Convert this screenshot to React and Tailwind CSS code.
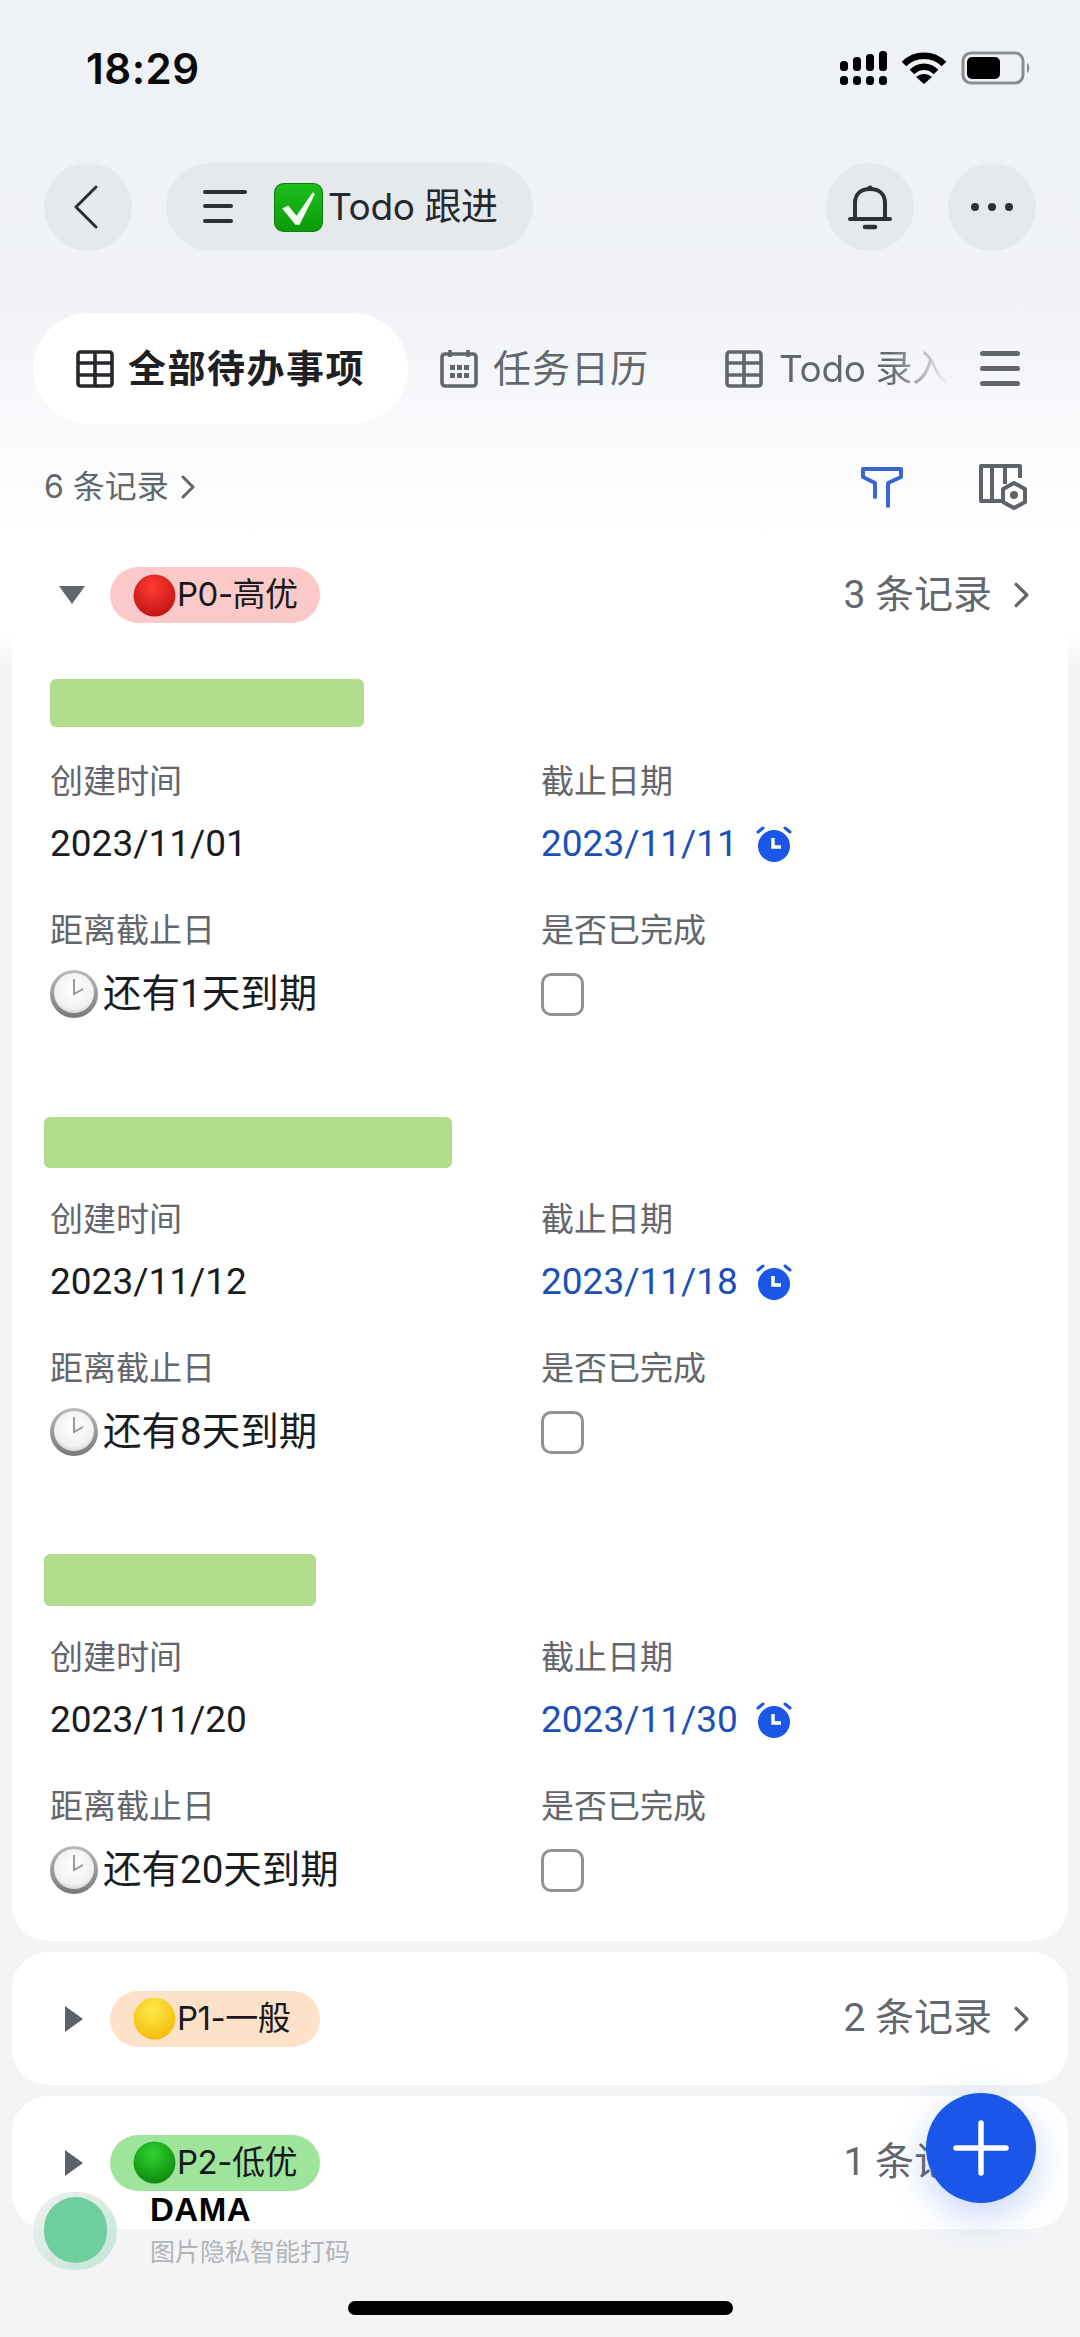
import React from 'react';

const FONT = 'font-["Inter","Noto_Sans_CJK_SC",sans-serif]';
const VALUE_FONT = 'font-["Roboto","Noto_Sans_CJK_SC",sans-serif]';

// 状态栏图标
const SignalIcon = () => (
  <svg width="48" height="36" viewBox="0 0 48 36" fill="#000">
    <rect x="1" y="11" width="8" height="10" rx="3.5" />
    <rect x="14" y="7" width="8" height="14" rx="3.5" />
    <rect x="27" y="4" width="8" height="17" rx="3.5" />
    <rect x="40" y="1" width="8" height="20" rx="3.5" />
    <rect x="1" y="26" width="8" height="9" rx="3.5" />
    <rect x="14" y="26" width="8" height="9" rx="3.5" />
    <rect x="27" y="26" width="8" height="9" rx="3.5" />
    <rect x="40" y="26" width="8" height="9" rx="3.5" />
  </svg>
);

const WifiIcon = () => (
  <svg width="46" height="34" viewBox="0 0 46 34" fill="none" stroke="#000" strokeWidth="6.5">
    <path d="M3 13C14 2 32 2 43 13" />
    <path d="M11 21C18 14 28 14 35 21" />
    <path d="M23 33L15 26C20 22 26 22 31 26Z" fill="#000" stroke="none" />
  </svg>
);

const BatteryIcon = () => (
  <svg width="70" height="34" viewBox="0 0 70 34">
    <rect x="2" y="2" width="60" height="30" rx="8" fill="none" stroke="#8b8c8e" strokeWidth="3" />
    <rect x="6" y="6" width="33" height="22" rx="5" fill="#000" />
    <path d="M66 12C69 13 69 21 66 22Z" fill="#8b8c8e" />
  </svg>
);

// 导航栏图标
const BackIcon = () => (
  <svg width="26" height="44" viewBox="0 0 26 44" fill="none" stroke="#2d3136" strokeWidth="3" strokeLinecap="round" strokeLinejoin="round">
    <path d="M23 2L3 22L23 42" />
  </svg>
);

const TitleMenuIcon = () => (
  <svg width="44" height="36" viewBox="0 0 44 36" fill="none" stroke="#2d3136" strokeWidth="4" strokeLinecap="round">
    <path d="M2 3H42" />
    <path d="M2 17H28" />
    <path d="M2 32H28" />
  </svg>
);

const BellIcon = () => (
  <svg width="44" height="46" viewBox="0 0 44 46" fill="none" stroke="#2d3136" strokeWidth="4" strokeLinecap="round">
    <path d="M7 34V19C7 10 13 5 22 5C31 5 37 10 37 19V34" />
    <path d="M2 35H42" />
    <path d="M17 43H27" strokeWidth="4.5" />
    <circle cx="22" cy="4" r="2.5" fill="#2d3136" stroke="none" />
  </svg>
);

const CheckEmoji = () => (
  <svg width="49" height="49" viewBox="0 0 48 48">
    <defs>
      <linearGradient id="checkBg" x1="0" y1="0" x2="0" y2="1">
        <stop offset="0" stopColor="#1cc01c" />
        <stop offset="1" stopColor="#0c9a0c" />
      </linearGradient>
    </defs>
    <rect x="0.5" y="0.5" width="47" height="47" rx="9" fill="url(#checkBg)" stroke="#0a7d0a" />
    <path d="M8 25L14 22L22 32L38 9L40 11L25 41H21Z" fill="#f4fff0" />
  </svg>
);

const TableIcon = ({ color }) => (
  <svg width="38" height="38" viewBox="0 0 38 38" fill="none" stroke={color} strokeWidth="3.6">
    <rect x="2" y="2" width="34" height="34" rx="2.5" />
    <path d="M2 13H36M2 25H36M19 2V36" />
  </svg>
);

const CalendarIcon = () => (
  <svg width="38" height="40" viewBox="0 0 38 40" fill="none" stroke="#63676c" strokeWidth="3.6">
    <rect x="2" y="5" width="34" height="32" rx="3" />
    <path d="M10 1V8M28 1V8" />
    <g fill="#63676c" stroke="none">
      <rect x="10" y="16" width="5" height="5" />
      <rect x="17" y="16" width="5" height="5" />
      <rect x="24" y="16" width="5" height="5" />
      <rect x="10" y="24" width="5" height="5" />
      <rect x="17" y="24" width="5" height="5" />
      <rect x="24" y="24" width="5" height="5" />
    </g>
  </svg>
);

const FilterIcon = () => (
  <svg width="44" height="42" viewBox="0 0 44 42" fill="none" stroke="#3b66d1" strokeWidth="4" strokeLinecap="round" strokeLinejoin="round">
    <path d="M15 31V17L3 11V3H41V11L28 17V40" />
  </svg>
);

const ViewSettingIcon = () => (
  <svg width="50" height="46" viewBox="0 0 50 46" fill="none" stroke="#5f6368" strokeWidth="4" strokeLinejoin="round">
    <path d="M27 37H3V2H42V14" />
    <path d="M14 2V37M27 2V20" />
    <path d="M36 19L47 25V38L36 44L25 38V25Z" fill="#fff" />
    <circle cx="36" cy="31" r="4" fill="#5f6368" stroke="none" />
  </svg>
);

const Chevron = ({ className }) => (
  <svg className={className} viewBox="0 0 14 24" fill="none" stroke="#62666b" strokeWidth="3" strokeLinecap="round" strokeLinejoin="round">
    <path d="M2 2L12 12L2 22" />
  </svg>
);

const TriangleDown = () => (
  <svg width="28" height="18" viewBox="0 0 28 18" fill="#62666d">
    <path d="M1 0H27L14 18Z" />
  </svg>
);

const TriangleRight = () => (
  <svg width="18" height="26" viewBox="0 0 18 26" fill="#5c6068">
    <path d="M0 0L18 13L0 26Z" />
  </svg>
);

const Dot = ({ id, light, dark }) => (
  <svg width="43" height="43" viewBox="0 0 42 42" className="shrink-0">
    <defs>
      <radialGradient id={id} cx="0.45" cy="0.3" r="0.8">
        <stop offset="0" stopColor={light} />
        <stop offset="1" stopColor={dark} />
      </radialGradient>
    </defs>
    <circle cx="21" cy="21" r="20.5" fill={`url(#${id})`} />
  </svg>
);

const ClockEmoji = () => (
  <svg width="48" height="48" viewBox="0 0 48 48" className="shrink-0">
    <defs>
      <radialGradient id="clockFace" cx="0.5" cy="0.4" r="0.65">
        <stop offset="0" stopColor="#ffffff" />
        <stop offset="0.75" stopColor="#f1f1ef" />
        <stop offset="1" stopColor="#c9c9c6" />
      </radialGradient>
      <linearGradient id="clockRim" x1="0" y1="0" x2="0" y2="1">
        <stop offset="0" stopColor="#b9bcc0" />
        <stop offset="1" stopColor="#77797b" />
      </linearGradient>
    </defs>
    <circle cx="24" cy="24" r="24" fill="url(#clockRim)" />
    <circle cx="24" cy="23" r="20" fill="url(#clockFace)" />
    <path d="M24 9V24L33 19" fill="none" stroke="#8f9296" strokeWidth="1.8" />
  </svg>
);

const AlarmIcon = () => (
  <svg width="36" height="36" viewBox="0 0 36 36" className="shrink-0">
    <circle cx="18" cy="20" r="16" fill="#1a56e8" />
    <path d="M2 6L7 2M34 6L29 2" stroke="#1a56e8" strokeWidth="3" strokeLinecap="round" />
    <path d="M17 12V21H25" fill="none" stroke="#fff" strokeWidth="3.5" />
  </svg>
);

// 记录卡片内字段
const FieldLabel = ({ children }) => (
  <div className="h-[44px] leading-[44px] text-[33px] text-[#63666b]">{children}</div>
);

const Record = ({ barClass, created, deadline, remain, isLast }) => (
  <div className={isLast ? 'pb-[46px]' : 'h-[438px]'}>
    <div className="h-[50px] flex items-center">
      <div className={`${barClass} bg-[#b0dc8c] rounded-[6px] shrink-0`} />
    </div>
    <div className="grid grid-cols-[491px_1fr] pl-[38px] mt-[31px]">
      <div>
        <FieldLabel>创建时间</FieldLabel>
        <div className={`${VALUE_FONT} mt-[16px] h-[50px] leading-[50px] text-[37px] text-[#1b1c1e]`}>{created}</div>
      </div>
      <div>
        <FieldLabel>截止日期</FieldLabel>
        <div className="mt-[16px] h-[50px] flex items-center">
          <span className={`${VALUE_FONT} w-[215px] text-[37px] text-[#1d4fb8]`}>{deadline}</span>
          <AlarmIcon />
        </div>
      </div>
      <div className="mt-[39px]">
        <FieldLabel>距离截止日</FieldLabel>
        <div className="mt-[17px] h-[50px] flex items-center gap-[5px]">
          <ClockEmoji />
          <span className={`${VALUE_FONT} text-[38.5px] text-[#1b1c1e]`}>{remain}</span>
        </div>
      </div>
      <div className="mt-[39px]">
        <FieldLabel>是否已完成</FieldLabel>
        <div className="mt-[17px] h-[50px] flex items-center">
          <div className="w-[43px] h-[43px] rounded-[10px] border-[3px] border-[#8f9296] bg-white" />
        </div>
      </div>
    </div>
  </div>
);

const Tag = ({ bg, dot, label }) => (
  <div className={`${bg} w-[210px] h-[56px] rounded-full flex items-center pl-[23px] text-[33px] text-[#17191c]`}>
    {dot}
    <span className="ml-[1px] tracking-[-0.5px] whitespace-nowrap">{label}</span>
  </div>
);

const GroupHeader = ({ open, tag, count }) => (
  <div className="flex items-center h-full">
    <div className={open ? 'w-[110px] pl-[58px]' : 'w-[110px] pl-[65px]'}>
      {open ? <TriangleDown /> : <TriangleRight />}
    </div>
    {tag}
    <div className={`${VALUE_FONT} ml-auto flex items-center pr-[51px] text-[39px] text-[#63666b]`}>
      <span>{count} 条记录</span>
      <Chevron className="w-[15px] h-[26px] ml-[22px]" />
    </div>
  </div>
);

const records = [
  { barClass: 'w-[314px] h-[48px] ml-[38px]', created: '2023/11/01', deadline: '2023/11/11', remain: '还有1天到期' },
  { barClass: 'w-[408px] h-[51px] ml-[32px] mt-[2px]', created: '2023/11/12', deadline: '2023/11/18', remain: '还有8天到期' },
  { barClass: 'w-[272px] h-[52px] ml-[32px] mt-[2px]', created: '2023/11/20', deadline: '2023/11/30', remain: '还有20天到期', isLast: true },
];

export default function App() {
  return (
    <div className={`${FONT} relative w-[1080px] h-[2337px] overflow-hidden bg-[#f2f4f6]`}>
      {/* 顶部渐变区域 */}
      <div className="h-[630px] bg-linear-to-b from-[#eef1f5] via-[#f1f3f7] via-50% to-white to-85%">
        <div className="h-[136px] flex items-center justify-between pl-[86px] pr-[49px]">
          <span className="text-[42px] font-semibold text-[#0b0b0b] tracking-[0.5px]">18:29</span>
          <div className="flex items-center gap-[14px]">
            <SignalIcon />
            <WifiIcon />
            <BatteryIcon />
          </div>
        </div>

        <div className="flex items-center pl-[44px] pr-[44px] mt-[27px]">
          <div className="w-[88px] h-[88px] rounded-full bg-[#e6e9ec] flex items-center justify-center pr-[4px]">
            <BackIcon />
          </div>
          <div className="ml-[34px] w-[367px] h-[88px] rounded-full bg-[#e6e9ec] flex items-center pl-[37px]">
            <TitleMenuIcon />
            <div className="ml-[27px]"><CheckEmoji /></div>
            <span className="ml-[5px] text-[37px] tracking-[-0.4px] text-[#25282c] whitespace-nowrap">Todo 跟进</span>
          </div>
          <div className="ml-auto w-[88px] h-[88px] rounded-full bg-[#e6e9ec] flex items-center justify-center">
            <BellIcon />
          </div>
          <div className="ml-[34px] w-[88px] h-[88px] rounded-full bg-[#e6e9ec] flex items-center justify-center gap-[9px]">
            <span className="w-[8px] h-[8px] rounded-full bg-[#2d3136]" />
            <span className="w-[8px] h-[8px] rounded-full bg-[#2d3136]" />
            <span className="w-[8px] h-[8px] rounded-full bg-[#2d3136]" />
          </div>
        </div>

        {/* 视图标签 */}
        <div className="flex items-center pl-[33px] mt-[62px] h-[111px]">
          <div className="w-[375px] h-[111px] rounded-full bg-white flex items-center pl-[43px]">
            <TableIcon color="#25282c" />
            <span className="ml-[14px] text-[38px] font-bold text-[#1e2023] tracking-[1.5px] whitespace-nowrap">全部待办事项</span>
          </div>
          <div className="ml-[32px] flex items-center">
            <CalendarIcon />
            <span className="ml-[15px] text-[38px] text-[#63676c] tracking-[1px] whitespace-nowrap">任务日历</span>
          </div>
          <div className="ml-[76px] flex items-center">
            <TableIcon color="#63676c" />
            <span className="ml-[16px] w-[170px] text-[37px] tracking-[-0.4px] whitespace-nowrap bg-linear-to-r from-[#63676c] from-65% to-transparent to-100% bg-clip-text text-transparent">Todo 录入</span>
          </div>
          <div className="ml-auto pr-[60px] flex flex-col gap-[10px]">
            <span className="block w-[40px] h-[5px] bg-[#63676c] rounded-full" />
            <span className="block w-[40px] h-[5px] bg-[#63676c] rounded-full" />
            <span className="block w-[40px] h-[5px] bg-[#63676c] rounded-full" />
          </div>
        </div>

        {/* 记录数与筛选 */}
        <div className="h-[126px] flex items-center pl-[44px] pr-[52px]">
          <span className="text-[32px] text-[#63666b]">6 条记录</span>
          <Chevron className="w-[14px] h-[24px] ml-[12px]" />
          <div className="ml-auto mr-[74px]"><FilterIcon /></div>
          <ViewSettingIcon />
        </div>

        <div className="h-[72px] mt-[9px]">
          <GroupHeader open count={3} tag={<Tag bg="bg-[#fcc9c9]" label="P0-高优" dot={<Dot id="dotRed" light="#ff3b30" dark="#b80f12" />} />} />
        </div>
      </div>

      {/* 分组卡片 */}
      <div className="px-[12px] bg-linear-to-b from-white to-[#f2f4f6] to-[40px]">
        <div className="bg-white rounded-b-[36px] pt-[48px]">
          {records.map((r) => (
            <Record key={r.created} {...r} />
          ))}
        </div>
      </div>
      <div className="mx-[12px] mt-[11px] flex flex-col gap-[11px]">
        <div className="bg-white rounded-[36px] h-[133px]">
          <div className="h-full -mx-[12px]">
            <GroupHeader count={2} tag={<Tag bg="bg-[#fde2c9]" label="P1-一般" dot={<Dot id="dotYellow" light="#ffe94d" dark="#f2b600" />} />} />
          </div>
        </div>
        <div className="bg-white rounded-[36px] h-[133px]">
          <div className="h-full -mx-[12px]">
            <GroupHeader count={1} tag={<Tag bg="bg-[#9fe49b]" label="P2-低优" dot={<Dot id="dotGreen" light="#2fd42f" dark="#0a7f0a" />} />} />
          </div>
        </div>
      </div>

      {/* 悬浮按钮 */}
      <div className="absolute left-[926px] top-[2093px] w-[110px] h-[110px] rounded-full bg-[#1a56e8] shadow-[0_12px_36px_rgba(26,86,232,0.25)] flex items-center justify-center">
        <svg width="56" height="56" viewBox="0 0 56 56" stroke="#fff" strokeWidth="5.5" strokeLinecap="round">
          <path d="M28 3V53M3 28H53" />
        </svg>
      </div>

      {/* 水印 */}
      <div className="absolute left-[33px] top-[2192px] w-[84px] h-[78px] rounded-full bg-linear-to-br from-[#f0f1f1] to-[#c3e5d3]">
        <div className="absolute left-[11px] top-[5px] w-[63px] h-[66px] rounded-full bg-[#6fce9e]" />
      </div>
      <div className="absolute left-[150px] top-[2190px] text-[33px] tracking-[0.5px] leading-[40px] font-black text-black font-['Liberation_Sans',sans-serif]">DAMA</div>
      <div className="absolute left-[150px] top-[2234px] text-[25px] leading-[36px] text-[#b3b5b8]">图片隐私智能打码</div>

      {/* Home 指示条 */}
      <div className="absolute left-[348px] top-[2301px] w-[385px] h-[14px] rounded-full bg-black" />
    </div>
  );
}
